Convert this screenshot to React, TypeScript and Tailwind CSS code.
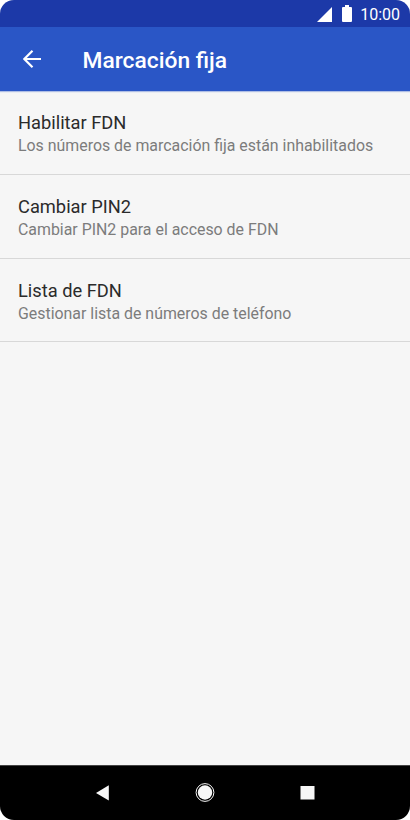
type Preference = {
  title: string;
  summary: string;
};

const preferences: Preference[] = [
  {
    title: "Habilitar FDN",
    summary: "Los números de marcación fija están inhabilitados",
  },
  { title: "Cambiar PIN2", summary: "Cambiar PIN2 para el acceso de FDN" },
  { title: "Lista de FDN", summary: "Gestionar lista de números de teléfono" },
];

function StatusBar() {
  return (
    <div className="flex h-[27px] shrink-0 items-start justify-end bg-[#1c39a8] pr-[10px] text-white">
      <svg className="mt-[7px] h-[15px] w-[15px]" viewBox="0 0 15 15" fill="currentColor">
        <path d="M15 0v15H0z" />
      </svg>
      <svg className="ml-[10px] mt-[5px] h-[17px] w-[10px]" viewBox="0 0 10 17" fill="currentColor">
        <path d="M3 0h4v2h2q1 0 1 1v13q0 1-1 1H1q-1 0-1-1V3q0-1 1-1h2z" />
      </svg>
      <span className="ml-[8px] mt-[5px] text-[16px] leading-5">10:00</span>
    </div>
  );
}

function AppBar() {
  return (
    <header className="flex h-16 shrink-0 items-center bg-[#2a56c6] pl-[23px] text-white shadow-[0_1px_1px_rgba(42,86,198,0.35)]">
      <svg
        className="h-[18px] w-[18px]"
        viewBox="0 0 18 18"
        fill="none"
        stroke="currentColor"
        strokeWidth="2.2"
      >
        <path d="M18 9H1.5M9.5 0.8L1.3 9l8.2 8.2" />
      </svg>
      <h1 className="ml-[41.5px] mt-[4px] text-[22.8px] font-medium leading-7">Marcación fija</h1>
    </header>
  );
}

function PreferenceRow({ title, summary }: Preference) {
  return (
    <li className="h-[84px] border-b border-[#d8d8d8] pl-[18px] pt-[20px] last:h-[83px]">
      <h2 className="text-[18.3px] leading-6 text-[#2b2b2b]">{title}</h2>
      <p className="whitespace-nowrap text-[15.9px] leading-[22px] text-[#7c7c7c]">{summary}</p>
    </li>
  );
}

function NavigationBar() {
  return (
    <nav className="h-[55px] shrink-0 border-t border-[#444] bg-black text-[#f7f7f7]">
      <svg className="block h-[54px] w-full" viewBox="0 0 410 54" fill="currentColor">
        <path d="M108.8 19.3v15.2L96 27z" />
        <circle cx="205" cy="26.5" r="7.2" />
        <circle cx="205" cy="26.5" r="8.9" fill="none" stroke="currentColor" strokeWidth="1" />
        <path d="M300.5 20h14v13.5h-14z" />
      </svg>
    </nav>
  );
}

export default function App() {
  return (
    <div className="bg-white">
      <div className="flex h-[820px] w-[410px] flex-col overflow-hidden rounded-[14px] bg-[#f6f6f6] font-['Roboto',sans-serif]">
        <StatusBar />
        <AppBar />
        <ul className="grow">
          {preferences.map((preference) => (
            <PreferenceRow key={preference.title} {...preference} />
          ))}
        </ul>
        <NavigationBar />
      </div>
    </div>
  );
}
